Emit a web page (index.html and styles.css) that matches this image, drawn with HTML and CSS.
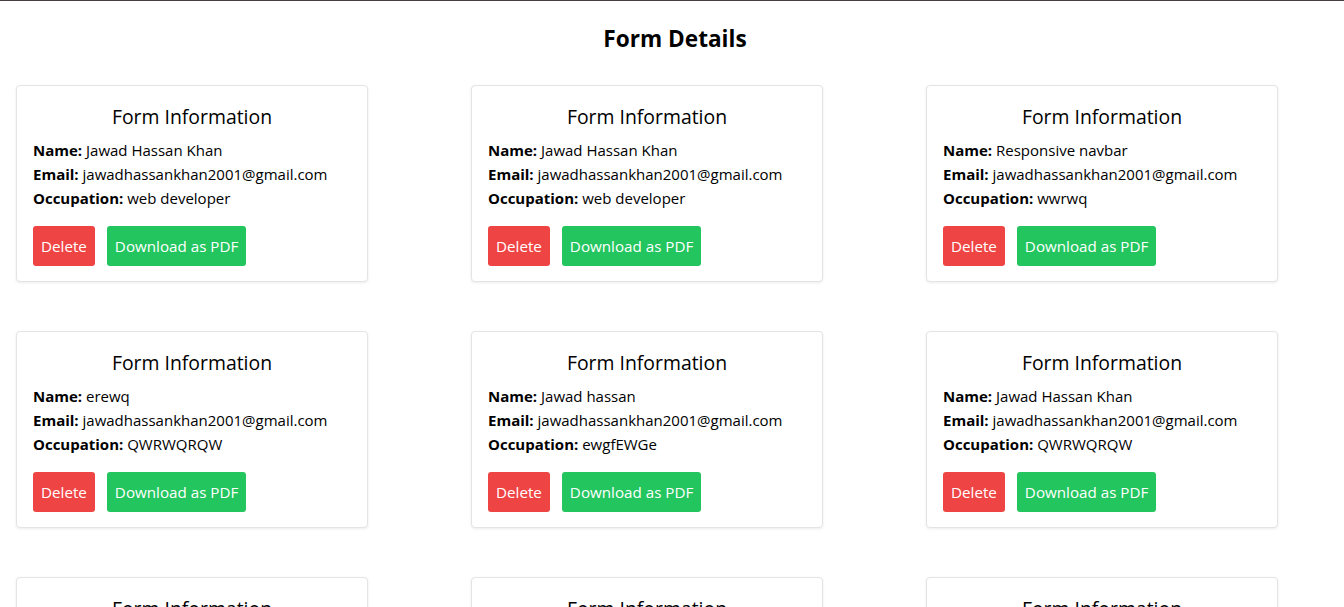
FILE: index.html
```html
<!DOCTYPE html>
<html lang="en">
<head>
<meta charset="utf-8">
<title>Form Details</title>
<link rel="stylesheet" href="styles.css">
</head>
<body>
<div class="topline"></div>
<h1 class="page-title">Form Details</h1>
<div class="grid">
  <div class="card">
    <h2 class="card-title">Form Information</h2>
    <p class="row"><strong>Name:</strong> Jawad Hassan Khan</p>
    <p class="row"><strong>Email:</strong> jawadhassankhan2001@gmail.com</p>
    <p class="row"><strong>Occupation:</strong> web developer</p>
    <div class="actions"><button class="btn btn-del">Delete</button><button class="btn btn-pdf">Download as PDF</button></div>
  </div>
  <div class="card">
    <h2 class="card-title">Form Information</h2>
    <p class="row"><strong>Name:</strong> Jawad Hassan Khan</p>
    <p class="row"><strong>Email:</strong> jawadhassankhan2001@gmail.com</p>
    <p class="row"><strong>Occupation:</strong> web developer</p>
    <div class="actions"><button class="btn btn-del">Delete</button><button class="btn btn-pdf">Download as PDF</button></div>
  </div>
  <div class="card">
    <h2 class="card-title">Form Information</h2>
    <p class="row"><strong>Name:</strong> Responsive navbar</p>
    <p class="row"><strong>Email:</strong> jawadhassankhan2001@gmail.com</p>
    <p class="row"><strong>Occupation:</strong> wwrwq</p>
    <div class="actions"><button class="btn btn-del">Delete</button><button class="btn btn-pdf">Download as PDF</button></div>
  </div>
  <div class="card">
    <h2 class="card-title">Form Information</h2>
    <p class="row"><strong>Name:</strong> erewq</p>
    <p class="row"><strong>Email:</strong> jawadhassankhan2001@gmail.com</p>
    <p class="row"><strong>Occupation:</strong> QWRWQRQW</p>
    <div class="actions"><button class="btn btn-del">Delete</button><button class="btn btn-pdf">Download as PDF</button></div>
  </div>
  <div class="card">
    <h2 class="card-title">Form Information</h2>
    <p class="row"><strong>Name:</strong> Jawad hassan</p>
    <p class="row"><strong>Email:</strong> jawadhassankhan2001@gmail.com</p>
    <p class="row"><strong>Occupation:</strong> ewgfEWGe</p>
    <div class="actions"><button class="btn btn-del">Delete</button><button class="btn btn-pdf">Download as PDF</button></div>
  </div>
  <div class="card">
    <h2 class="card-title">Form Information</h2>
    <p class="row"><strong>Name:</strong> Jawad Hassan Khan</p>
    <p class="row"><strong>Email:</strong> jawadhassankhan2001@gmail.com</p>
    <p class="row"><strong>Occupation:</strong> QWRWQRQW</p>
    <div class="actions"><button class="btn btn-del">Delete</button><button class="btn btn-pdf">Download as PDF</button></div>
  </div>
  <div class="card">
    <h2 class="card-title">Form Information</h2>
    <p class="row"><strong>Name:</strong> Jawad Hassan Khan</p>
    <p class="row"><strong>Email:</strong> jawadhassankhan2001@gmail.com</p>
    <p class="row"><strong>Occupation:</strong> web developer</p>
    <div class="actions"><button class="btn btn-del">Delete</button><button class="btn btn-pdf">Download as PDF</button></div>
  </div>
  <div class="card">
    <h2 class="card-title">Form Information</h2>
    <p class="row"><strong>Name:</strong> Jawad Hassan Khan</p>
    <p class="row"><strong>Email:</strong> jawadhassankhan2001@gmail.com</p>
    <p class="row"><strong>Occupation:</strong> web developer</p>
    <div class="actions"><button class="btn btn-del">Delete</button><button class="btn btn-pdf">Download as PDF</button></div>
  </div>
  <div class="card">
    <h2 class="card-title">Form Information</h2>
    <p class="row"><strong>Name:</strong> Jawad Hassan Khan</p>
    <p class="row"><strong>Email:</strong> jawadhassankhan2001@gmail.com</p>
    <p class="row"><strong>Occupation:</strong> web developer</p>
    <div class="actions"><button class="btn btn-del">Delete</button><button class="btn btn-pdf">Download as PDF</button></div>
  </div>
</div>
</body>
</html>
```

FILE: styles.css
```css
* { box-sizing: border-box; }
html, body {
  margin: 0;
  padding: 0;
  background: #ffffff;
  color: #000000;
  font-family: "Open Sans", "Noto Sans", sans-serif;
  font-size: 15px;
  line-height: 24px;
}
.topline {
  height: 1px;
  background: #4a3e44;
}
.page-title {
  margin: 22px 0 0;
  padding-left: 6px;
  text-align: center;
  font-size: 22.6px;
  line-height: 32px;
  font-weight: 700;
}
.grid {
  display: grid;
  grid-template-columns: repeat(3, 352px);
  column-gap: 103px;
  row-gap: 49px;
  padding: 30px 16px 0;
}
.card {
  border: 1px solid #e4e4e4;
  border-radius: 4px;
  box-shadow: 0 1px 3px rgba(0, 0, 0, 0.08);
  padding: 16px 16px 15px;
  background: #fff;
}
.card-title {
  margin: 0 0 7px;
  padding-top: 1px;
  text-align: center;
  font-size: 19.4px;
  line-height: 28px;
  font-weight: 400;
}
.row {
  margin: 0;
}
.row strong { font-weight: 700; }
.actions {
  display: flex;
  gap: 12px;
  margin-top: 16px;
}
.btn {
  font-family: inherit;
  font-size: 15.2px;
  line-height: 24px;
  padding: 8px;
  border: 0;
  border-radius: 3px;
  color: #ffffff;
}
.btn-del { background: #ef4444; }
.btn-pdf { background: #22c55e; }
```
